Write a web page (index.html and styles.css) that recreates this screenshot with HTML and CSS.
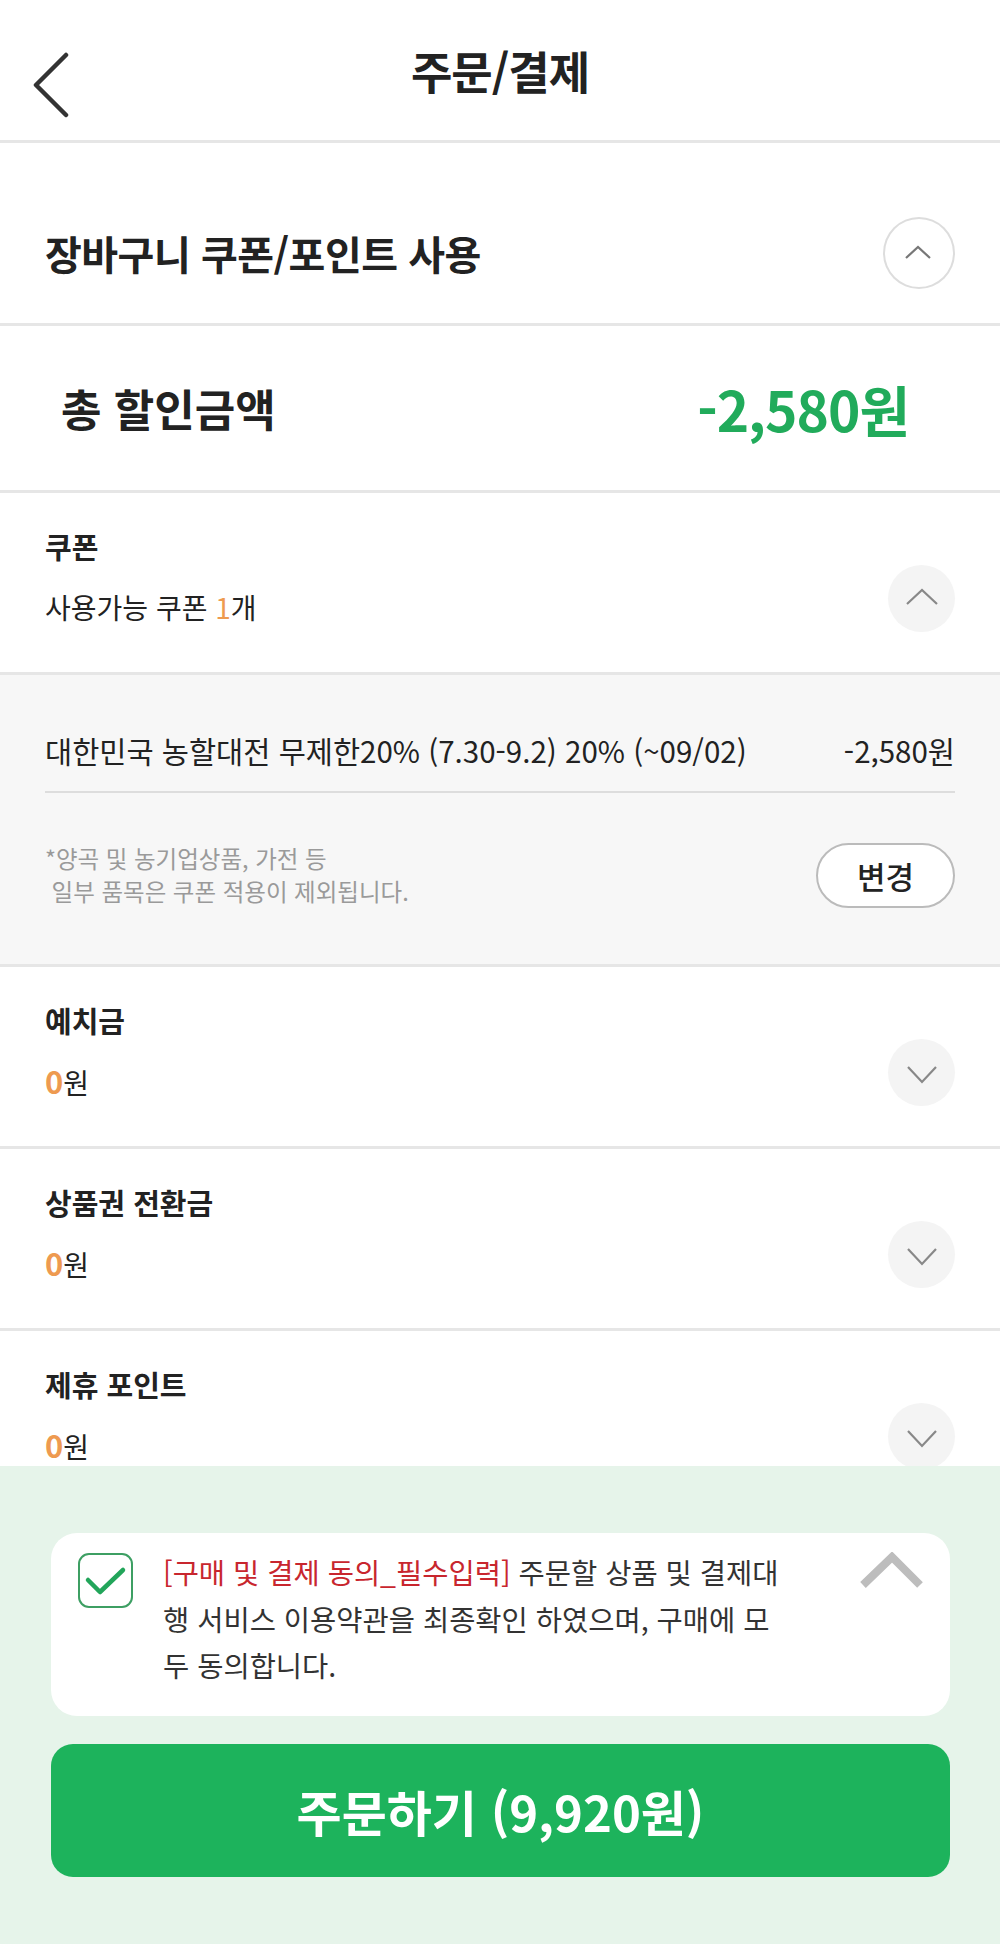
FILE: index.html
```html
<!DOCTYPE html>
<html lang="ko">
<head>
  <meta charset="UTF-8" />
  <meta name="viewport" content="width=device-width, initial-scale=1" />
  <title>주문/결제</title>
  <link rel="stylesheet" href="styles.css">
</head>
<body>
  <header class="topbar">
    <div class="topbar-left">
      <svg class="back" width="44" height="70" viewBox="0 0 44 70" aria-label="뒤로">
        <path d="M36 3 L6 33 L36 63" fill="none" stroke="#333" stroke-width="4.5" stroke-linecap="round" stroke-linejoin="round"/>
      </svg>
    </div>
    <h1 class="topbar-title">주문/결제</h1>
    <div></div>
  </header>

  <section class="cart-head">
    <h2>장바구니 쿠폰/포인트 사용</h2>
    <button class="circle-btn outline" aria-label="접기">
      <svg width="72" height="72" viewBox="0 0 72 72"><path d="M23 41 L35 30 L47 41" fill="none" stroke="#777" stroke-width="2.2"/></svg>
    </button>
  </section>

  <section class="total">
    <span class="total-label">총 할인금액</span>
    <span class="total-amount">-2,580원</span>
  </section>

  <section class="benefit">
    <div class="benefit-info">
      <div class="benefit-title">쿠폰</div>
      <div class="benefit-value">사용가능 쿠폰 <em class="num">1</em>개</div>
    </div>
    <button class="circle-btn soft" aria-label="접기">
      <svg width="67" height="67" viewBox="0 0 67 67"><path d="M19 39 L34 25 L49 39" fill="none" stroke="#888" stroke-width="2.2"/></svg>
    </button>
  </section>

  <div class="coupon-panel">
    <div class="coupon-row">
      <span>대한민국 농할대전 무제한20% (7.30-9.2) 20% (~09/02)</span>
      <span>-2,580원</span>
    </div>
    <div class="coupon-foot">
      <p class="coupon-note">*양곡 및 농기업상품, 가전 등<br>&nbsp;일부 품목은 쿠폰 적용이 제외됩니다.</p>
      <button class="change-btn">변경</button>
    </div>
  </div>

  <section class="benefit">
    <div class="benefit-info">
      <div class="benefit-title">예치금</div>
      <div class="benefit-value"><em class="num zero">0</em>원</div>
    </div>
    <button class="circle-btn soft" aria-label="펼치기">
      <svg width="67" height="67" viewBox="0 0 67 67"><path d="M20 28 L34 43 L48 28" fill="none" stroke="#888" stroke-width="2.2"/></svg>
    </button>
  </section>

  <section class="benefit">
    <div class="benefit-info">
      <div class="benefit-title">상품권 전환금</div>
      <div class="benefit-value"><em class="num zero">0</em>원</div>
    </div>
    <button class="circle-btn soft" aria-label="펼치기">
      <svg width="67" height="67" viewBox="0 0 67 67"><path d="M20 28 L34 43 L48 28" fill="none" stroke="#888" stroke-width="2.2"/></svg>
    </button>
  </section>

  <section class="benefit">
    <div class="benefit-info">
      <div class="benefit-title">제휴 포인트</div>
      <div class="benefit-value"><em class="num zero">0</em>원</div>
    </div>
    <button class="circle-btn soft" aria-label="펼치기">
      <svg width="67" height="67" viewBox="0 0 67 67"><path d="M20 28 L34 43 L48 28" fill="none" stroke="#888" stroke-width="2.2"/></svg>
    </button>
  </section>

  <footer class="order-bar">
    <div class="agree-card">
      <span class="checkbox">
        <svg width="51" height="51" viewBox="0 0 51 51"><path d="M8 25 L20 37 L43 15" fill="none" stroke="#22a55a" stroke-width="4.5" stroke-linecap="round" stroke-linejoin="round"/></svg>
      </span>
      <p class="agree-text"><span class="required">[구매 및 결제 동의_필수입력]</span> 주문할 상품 및 결제대행 서비스 이용약관을 최종확인 하였으며, 구매에 모두 동의합니다.</p>
      <svg class="agree-toggle" width="67" height="40" viewBox="0 0 67 40"><path d="M5 33 L34 5 L62 33" fill="none" stroke="#bdbdbd" stroke-width="8"/></svg>
    </div>
    <button class="order-btn">주문하기 (9,920원)</button>
  </footer>
</body>
</html>
```

FILE: styles.css
```css
:root {
  --text: #222;
  --line: #e6e6e6;
  --green: #1db35c;
  --green-text: #21ab5b;
  --orange: #ee9a50;
  --font-family: "Noto Sans CJK KR", "Noto Sans", sans-serif;
}

body {
  margin: 0;
  font-family: var(--font-family);
  color: var(--text);
  background: #fff;
}

button {
  font-family: inherit;
  cursor: pointer;
}

.topbar {
  height: 140px;
  display: grid;
  grid-template-columns: 1fr auto 1fr;
  align-items: center;
  border-bottom: 3px solid var(--line);
}
.topbar-left {
  padding-left: 30px;
  display: flex;
}
.back {
  margin-top: 34px;
}
.topbar-title {
  margin: 0;
  font-size: 45px;
  font-weight: 700;
  letter-spacing: -1px;
}

.cart-head {
  display: flex;
  justify-content: space-between;
  align-items: center;
  padding: 74px 45px 34px;
  border-bottom: 3px solid var(--line);
}
.cart-head h2 {
  margin: 0;
  font-size: 40px;
  font-weight: 700;
  letter-spacing: -0.5px;
}

.circle-btn {
  padding: 0;
  border: none;
  border-radius: 50%;
  display: flex;
  flex-shrink: 0;
}
.circle-btn.outline {
  width: 72px;
  height: 72px;
  background: #fff;
  box-shadow: inset 0 0 0 2px #ddd;
}
.circle-btn.soft {
  width: 67px;
  height: 67px;
  background: #f4f4f4;
  margin-top: 39px;
}

.total {
  height: 164px;
  display: flex;
  justify-content: space-between;
  align-items: center;
  padding: 0 91px 0 61px;
  border-bottom: 3px solid var(--line);
}
.total-label {
  font-size: 44px;
  font-weight: 700;
}
.total-amount {
  font-size: 55px;
  font-weight: 700;
  color: var(--green-text);
  letter-spacing: -1px;
}

.benefit {
  height: 182px;
  box-sizing: border-box;
  display: flex;
  justify-content: space-between;
  align-items: flex-start;
  padding: 33px 45px 0;
  border-bottom: 3px solid var(--line);
}
.benefit-info {
  display: flex;
  flex-direction: column;
  gap: 21px;
}
.benefit-title {
  font-size: 29px;
  font-weight: 700;
  line-height: 40px;
}
.benefit-value {
  font-size: 28px;
  line-height: 40px;
}
.num {
  font-style: normal;
  color: var(--orange);
}
.num.zero {
  font-size: 31px;
  font-weight: 700;
}

.coupon-panel {
  background: #f7f7f7;
  padding: 0 45px;
  border-bottom: 3px solid var(--line);
}
.coupon-row {
  display: flex;
  justify-content: space-between;
  font-size: 29.5px;
  line-height: 40px;
  padding: 55px 0 21px;
  border-bottom: 2px solid #ddd;
}
.coupon-foot {
  display: flex;
  justify-content: space-between;
  align-items: center;
  padding: 49px 0 56px;
}
.coupon-note {
  margin: 0;
  font-size: 23.5px;
  line-height: 33px;
  color: #9a9a9a;
}
.change-btn {
  width: 139px;
  height: 65px;
  border: 2px solid #bbb;
  border-radius: 33px;
  background: #fff;
  font-size: 31px;
  font-weight: 500;
  color: var(--text);
}

.order-bar {
  position: fixed;
  left: 0;
  right: 0;
  bottom: 0;
  height: 478px;
  box-sizing: border-box;
  background: #e6f4ea;
  padding: 67px 50px 0 51px;
  display: flex;
  flex-direction: column;
  gap: 28px;
}
.agree-card {
  height: 183px;
  box-sizing: border-box;
  background: #fff;
  border-radius: 26px;
  padding: 16px 25px 0 27px;
  display: flex;
  align-items: flex-start;
}
.checkbox {
  width: 55px;
  height: 55px;
  box-sizing: border-box;
  border: 2.5px solid #3d9f63;
  border-radius: 11px;
  margin-top: 4px;
  flex-shrink: 0;
  display: flex;
}
.agree-text {
  margin: 0 0 0 30px;
  width: 620px;
  font-size: 28.5px;
  line-height: 46.5px;
  color: #333;
  word-break: break-all;
}
.required {
  color: #c8262e;
}
.agree-toggle {
  margin-left: auto;
  margin-top: 3px;
}
.order-btn {
  height: 133px;
  border: none;
  border-radius: 22px;
  background: var(--green);
  color: #fff;
  font-size: 49px;
  font-weight: 700;
}
```
